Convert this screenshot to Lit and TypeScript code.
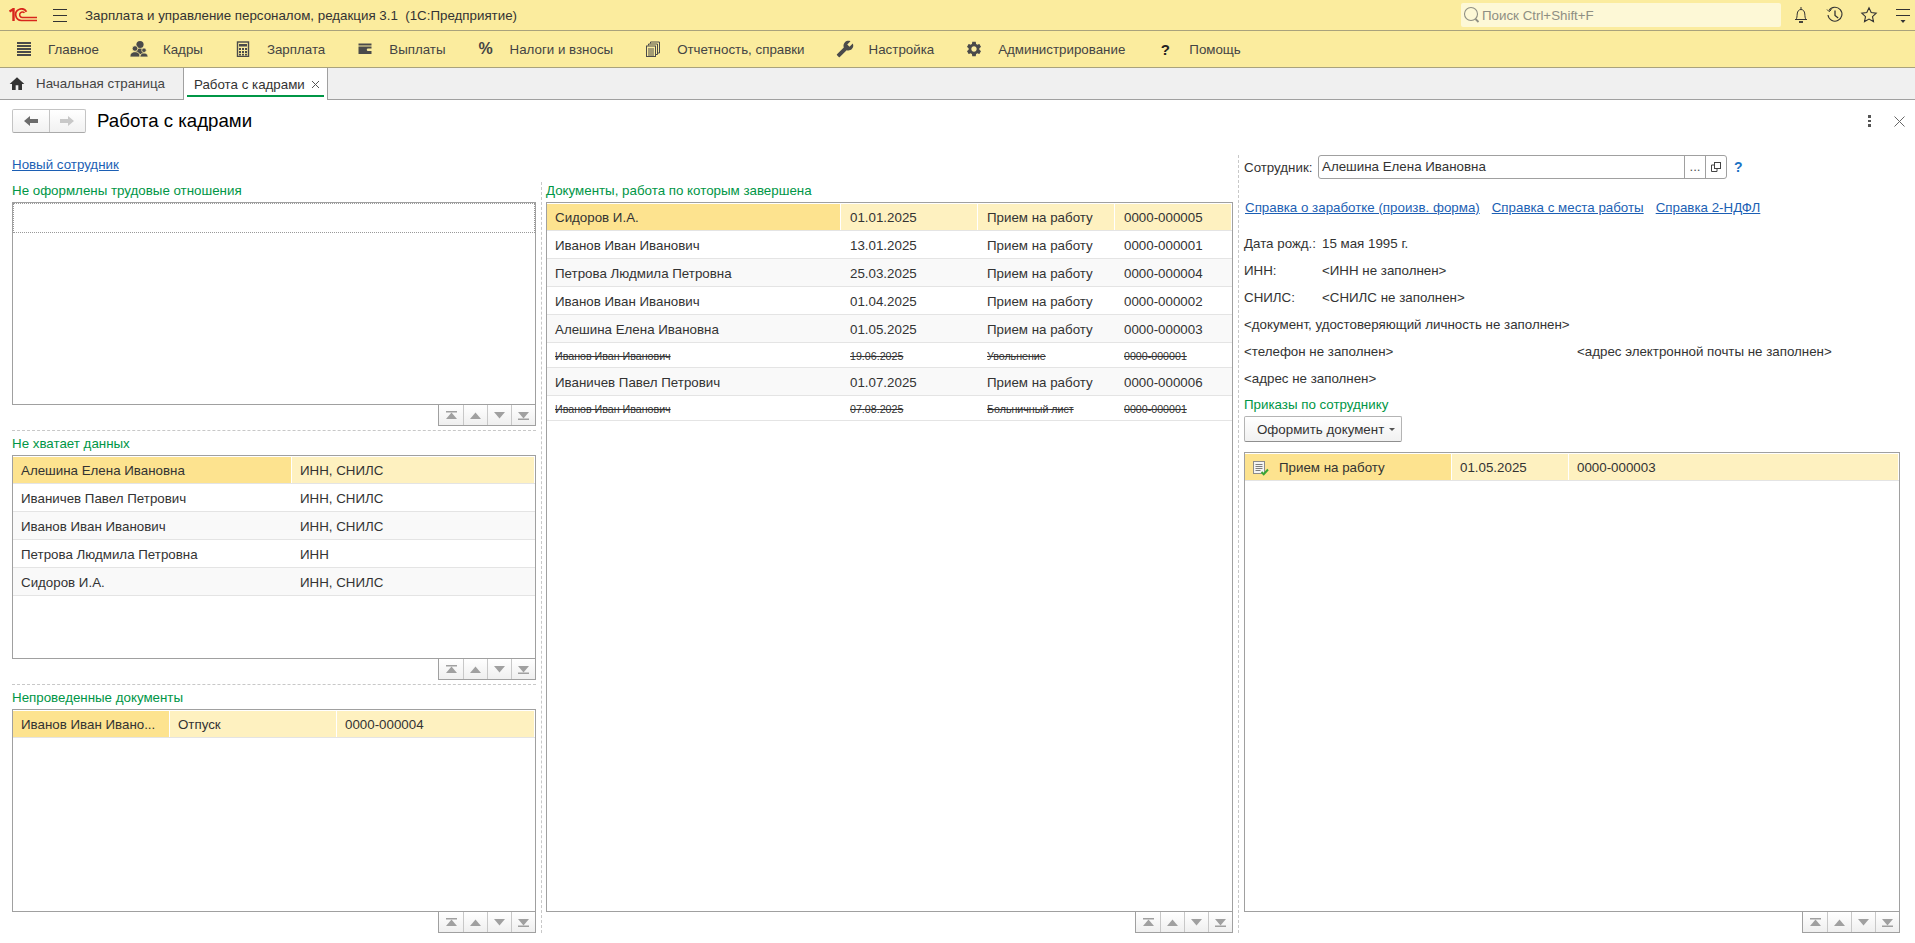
import { LitElement, html, svg, css } from 'lit';
import { customElement } from 'lit/decorators.js';

// icons
const icons = {
  list: html`<svg width="16" height="16" viewBox="0 0 16 16" fill="#4a4a4a"><rect x="1" y="1" width="14" height="2"/><rect x="1" y="4" width="14" height="2"/><rect x="1" y="7" width="14" height="2"/><rect x="1" y="10" width="14" height="2"/><rect x="1" y="13" width="14" height="2"/></svg>`,
  people: html`<svg width="18" height="18" viewBox="0 0 18 18" fill="#4a4a4a"><circle cx="10" cy="4.5" r="3.6"/><path d="M5.5 12c0-2.5 2-3.6 4.5-3.6s4.5 1.1 4.5 3.6v2h-9z"/><circle cx="5" cy="8.5" r="2.8" stroke="#fbec9e" stroke-width=".8"/><path d="M0 16c0-2.700 2.200-4.300 5-4.300s5 1.600 5 4.300v1H0z" stroke="#fbec9e" stroke-width=".8"/><circle cx="14" cy="10.200" r="2.300" stroke="#fbec9e" stroke-width=".8"/><path d="M10 16.500c0-2.300 1.800-3.500 4-3.500s4 1.200 4 3.500v.5h-8z" stroke="#fbec9e" stroke-width=".8"/></svg>`,
  calc: html`<svg width="16" height="16" viewBox="0 0 16 16"><rect x="2.500" y="1" width="11" height="14.500" fill="none" stroke="#4a4a4a" stroke-width="1.400"/><rect x="4" y="3" width="8" height="2.500" fill="#4a4a4a"/><g fill="#4a4a4a"><rect x="4" y="7" width="2" height="2"/><rect x="7" y="7" width="2" height="2"/><rect x="10" y="7" width="2" height="2"/><rect x="4" y="10" width="2" height="2"/><rect x="7" y="10" width="2" height="2"/><rect x="10" y="10" width="2" height="2"/><rect x="4" y="12.800" width="2" height="1.700"/><rect x="7" y="12.800" width="2" height="1.700"/><rect x="10" y="12.800" width="2" height="1.700"/></g></svg>`,
  wallet: html`<svg width="16" height="16" viewBox="0 0 16 16" fill="#4a4a4a"><path d="M1.500 2.500h13v2h-13z"/><path d="M1.500 5.500h13v2h-3.500a1 1 0 0 0 0 2.500h3.500v3h-13z"/></svg>`,
  docs: html`<svg width="16" height="16" viewBox="0 0 16 16" fill="none" stroke="#4a4a4a"><path d="M5.500 2.500V1h9v11h-1.500M3.500 4.500V3h9v10.500h-1.500"/><rect x="1.500" y="5" width="9" height="10.500" fill="#fbec9e"/><path d="M3 8h6M3 10h6M3 12h6M3 14h6" stroke-width="1"/></svg>`,
  wrench: html`<svg width="18" height="18" viewBox="0 0 24 24" fill="#4a4a4a"><path transform="translate(24 0) scale(-1 1)" d="M22.700 19l-9.100-9.100c.9-2.300.4-5-1.500-6.900-2-2-5-2.400-7.400-1.300L9 6 6 9 1.600 4.700C.4 7.100.9 10.100 2.900 12.100c1.900 1.900 4.600 2.400 6.900 1.500l9.100 9.100c.4.400 1 .4 1.400 0l2.300-2.300c.5-.4.5-1.100.1-1.400z"/></svg>`,
  gear: html`<svg width="18" height="18" viewBox="0 0 24 24" fill="#4a4a4a"><path d="M19.140 12.940c.04-.3.06-.61.06-.94 0-.32-.02-.64-.07-.94l2.030-1.580c.18-.14.23-.41.12-.61l-1.920-3.320c-.12-.22-.37-.29-.59-.22l-2.390.96c-.5-.38-1.030-.7-1.620-.94l-.36-2.540c-.04-.24-.24-.41-.48-.41h-3.840c-.24 0-.43.17-.47.41l-.36 2.540c-.59.24-1.130.57-1.620.94l-2.390-.96c-.22-.08-.47 0-.59.22L2.740 8.870c-.12.21-.08.47.12.61l2.030 1.580c-.05.3-.09.63-.09.94s.02.64.07.94l-2.030 1.580c-.18.14-.23.41-.12.61l1.920 3.320c.12.22.37.29.59.22l2.390-.96c.5.38 1.030.7 1.620.94l.36 2.540c.05.24.24.41.48.41h3.840c.24 0 .44-.17.47-.41l.36-2.540c.59-.24 1.130-.56 1.620-.94l2.390.96c.22.08.47 0 .59-.22l1.920-3.320c.12-.22.07-.47-.12-.61l-2.010-1.580zM12 15.600c-1.980 0-3.600-1.620-3.600-3.600s1.620-3.600 3.600-3.600 3.600 1.620 3.600 3.600-1.620 3.600-3.600 3.600z"/></svg>`,
  home: html`<svg width="16" height="16" viewBox="0 0 24 24" fill="#333"><path d="M10 21v-7h4v7h5.500v-9H23L12 2 1 12h3.500v9z"/></svg>`,
  bell: html`<svg width="16" height="18" viewBox="0 0 16 18" fill="none" stroke="#333"><path d="M3 13.500c1-1.500 1-3 1.200-5.500C4.400 5 6 3.500 8 3.500S11.600 5 11.800 8c.2 2.500.2 4 1.200 5.500z"/><path d="M8 1v2.500M2 13.500h12"/><path d="M6 16h4" stroke-width="1.800"/></svg>`,
  history: html`<svg width="18" height="18" viewBox="0 0 18 18" fill="none" stroke="#333" stroke-width="1.100"><path d="M3 4.500A7 7 0 1 1 2 9"/><path d="M1 3.500l2.200 2.200L5.500 3.500" stroke-width="1"/><path d="M9 4.500V9.500l3.200 2.500" stroke-width="1.300"/></svg>`,
  star: html`<svg width="18" height="18" viewBox="0 0 18 18" fill="none" stroke="#333" stroke-width="1.100"><path d="M9 1.800l2.200 4.700 5 .6-3.700 3.500 1 5L9 13.100l-4.500 2.500 1-5L1.800 7.100l5-.6z"/></svg>`,
  panel: html`<svg width="16" height="18" viewBox="0 0 16 18" fill="#333"><rect x="1" y="3" width="14" height="1"/><rect x="1" y="9" width="14" height="1"/><path d="M5.500 14h5L8 17z"/></svg>`,
  search: html`<svg width="18" height="20" viewBox="0 0 18 20" fill="none" stroke="#8f8f83"><circle cx="8" cy="9" r="6.500" stroke-width="1.100"/><path d="M12.500 14l3 3" stroke-width="1.800"/></svg>`,
  doc: html`<svg width="16" height="16" viewBox="0 0 16 16"><rect x=".5" y="1.500" width="11" height="12" fill="#f4f4f4" stroke="#8c8c8c"/><path d="M2.500 4.500h7M2.500 6.500h7M2.500 8.500h7M2.500 10.500h5" stroke="#7d7d7d"/><path d="M8.500 12l2.200 2.200L15 9.500" fill="none" stroke="#3aa535" stroke-width="2"/></svg>`,
};

const logo = html`<svg class="logo" width="29" height="14" viewBox="0 0 29 14" fill="none" stroke="#d8261c">
  <path d="M.5 3.500L4.500 1V13" stroke-width="2.400"/>
  <path d="M28 12.500H12.500a5.800 5.800 0 1 1 5-8.700" stroke-width="1.700"/>
  <path d="M28 9.500H13.500a2.800 2.800 0 1 1 2-4.700" stroke-width="1.500"/>
</svg>`;

const menu = [
  { icon: icons.list, label: 'Главное' },
  { icon: icons.people, label: 'Кадры' },
  { icon: icons.calc, label: 'Зарплата' },
  { icon: icons.wallet, label: 'Выплаты' },
  { icon: html`<b class="glyph">%</b>`, label: 'Налоги и взносы' },
  { icon: icons.docs, label: 'Отчетность, справки' },
  { icon: icons.wrench, label: 'Настройка' },
  { icon: icons.gear, label: 'Администрирование' },
  { icon: html`<b class="glyph ask">?</b>`, label: 'Помощь' },
];

const missing = [
  ['Алешина Елена Ивановна', 'ИНН, СНИЛС'],
  ['Иваничев Павел Петрович', 'ИНН, СНИЛС'],
  ['Иванов Иван Иванович', 'ИНН, СНИЛС'],
  ['Петрова Людмила Петровна', 'ИНН'],
  ['Сидоров И.А.', 'ИНН, СНИЛС'],
];

const finished: { cells: string[]; off?: boolean }[] = [
  { cells: ['Сидоров И.А.', '01.01.2025', 'Прием на работу', '0000-000005'] },
  { cells: ['Иванов Иван Иванович', '13.01.2025', 'Прием на работу', '0000-000001'] },
  { cells: ['Петрова Людмила Петровна', '25.03.2025', 'Прием на работу', '0000-000004'] },
  { cells: ['Иванов Иван Иванович', '01.04.2025', 'Прием на работу', '0000-000002'] },
  { cells: ['Алешина Елена Ивановна', '01.05.2025', 'Прием на работу', '0000-000003'] },
  { cells: ['Иванов Иван Иванович', '19.06.2025', 'Увольнение', '0000-000001'], off: true },
  { cells: ['Иваничев Павел Петрович', '01.07.2025', 'Прием на работу', '0000-000006'] },
  { cells: ['Иванов Иван Иванович', '07.08.2025', 'Больничный лист', '0000-000001'], off: true },
];

@customElement('app-root')
export class AppRoot extends LitElement {
  static styles = css`
    :host {
      display: block;
      height: 943px;
      overflow: hidden;
      background: #fff;
      color: #333;
      font: 13.33px 'Liberation Sans', Arial, sans-serif;
    }

    /* top bars */
    .topbar {
      height: 30px;
      background: #fbec9e;
      border-bottom: 1px solid #a9a27c;
      display: flex;
      align-items: center;
    }
    .logo { margin-left: 9px; }
    .burger {
      width: 14px;
      height: 11px;
      margin-left: 15px;
      border-top: 1px solid #333;
      border-bottom: 1px solid #333;
      position: relative;
    }
    .burger::after {
      content: '';
      position: absolute;
      left: 0;
      right: 0;
      top: 5px;
      border-top: 1px solid #333;
    }
    .app-title { margin-left: 18px; white-space: pre; }
    .search {
      margin-left: auto;
      width: 320px;
      height: 24px;
      background: #fdf8d6;
      border-radius: 2px;
      display: flex;
      align-items: center;
      color: #8f8f83;
      padding-left: 2px;
      gap: 1px;
      box-sizing: border-box;
    }
    .tools { display: flex; align-items: center; margin-left: 11px; margin-right: 3px; gap: 16px; }
    .tools span { width: 18px; height: 18px; display: grid; place-items: center; }

    .menu {
      height: 36px;
      background: #fbec9e;
      border-bottom: 1px solid #a9a27c;
      display: flex;
      align-items: center;
      padding-left: 12px;
      gap: 28px;
    }
    .menu-item { display: flex; align-items: center; gap: 12px; color: #444; }
    .menu-icon { width: 24px; height: 20px; display: grid; place-items: center; }
    .glyph { font-size: 16px; color: #444; }
    .ask { color: #222; font-size: 15px; }

    .tabs {
      height: 31px;
      background: #f0f0f0;
      border-bottom: 1px solid #a0a0a0;
      display: flex;
    }
    .tab {
      display: flex;
      align-items: center;
      box-sizing: border-box;
      border-right: 1px solid #a0a0a0;
      position: relative;
    }
    .tab-home { width: 184px; padding-left: 9px; gap: 11px; color: #444; }
    .tab-active { width: 144px; padding-left: 10px; background: #fff; margin-bottom: -1px; }
    .tab-active::after {
      content: '';
      position: absolute;
      left: 3px;
      right: 3px;
      bottom: 3px;
      height: 2px;
      background: #009646;
    }
    .tab-close { position: absolute; right: 7px; top: 12px; }

    /* page head */
    .head {
      height: 55px;
      display: flex;
      align-items: flex-start;
      box-sizing: border-box;
      padding: 9px 10px 0 12px;
    }
    .nav {
      display: flex;
      width: 74px;
      height: 24px;
      box-sizing: border-box;
      border: 1px solid #c4c4c4;
      border-bottom-color: #aaa;
      border-radius: 2px;
      background: linear-gradient(#fff, #f1f1f1);
    }
    .nav span { flex: 1; display: grid; place-items: center; }
    .nav span + span { border-left: 1px solid #c4c4c4; }
    .title { font-size: 18.67px; color: #000; margin-left: 11px; line-height: 24px; }
    .head-tools { margin-left: auto; display: flex; align-items: center; gap: 23px; height: 24px; }
    .dots { display: flex; flex-direction: column; gap: 2px; }
    .dots i { width: 3px; height: 2.5px; background: #555; display: block; }

    /* body layout */
    .body { display: flex; height: 778px; padding-left: 12px; }
    .main { width: 1221px; }
    .link-row { height: 27px; line-height: 19px; }
    .columns { display: flex; height: 751px; }
    .col { display: flex; flex-direction: column; }
    .col-left { width: 524px; }
    .col-center { width: 687px; }
    .col-right { width: 656px; }
    .vsplit { width: 0; height: 751px; margin: 0 4px 0 5px; border-left: 1px dashed #c8c8c8; }
    .vsplit-main { height: 778px; margin: 0 5px; }
    .hsplit { border-top: 1px dashed #c8c8c8; margin-top: 4px; }

    a { color: #1c5fb4; text-decoration: underline; }
    .heading { color: #009646; height: 20px; line-height: 18px; }
    .heading-next { height: 24px; line-height: 26px; }

    /* tables */
    .table {
      box-sizing: border-box;
      border: 1px solid #a0a0a0;
      background: #fff;
      overflow: hidden;
    }
    .h-top { height: 203px; }
    .h-mid { height: 204px; }
    .h-bottom { height: 203px; }
    .h-docs { height: 710px; }
    .h-orders { height: 460px; }

    .focus { height: 30px; box-sizing: border-box; border: 1px dotted #999; }

    .row {
      display: grid;
      height: 28px;
      box-sizing: border-box;
      border-bottom: 1px solid #e4e4e4;
      align-items: center;
      column-gap: 1px;
      white-space: nowrap;
    }
    .row:nth-child(odd) { background: #f9f9f9; }
    .row.sel {
      background: #fff;
      padding: 1px 1px 0 0;
      align-items: stretch;
    }
    .row.sel .cell { background: #fef1c0; line-height: 25px; }
    .row.sel .cell:first-child { background: #fde38f; }
    .row.off { height: 25px; font-size: 10.67px; text-decoration: line-through; }
    .cell { padding: 1px 0 0 9px; overflow: hidden; }
    .cell:first-child { padding-left: 8px; }
    .cols-missing { grid-template-columns: 278px 1fr; }
    .cols-draft { grid-template-columns: 156px 166px 1fr; }
    .cols-docs { grid-template-columns: 293px 136px 136px 1fr; }
    .cols-orders { grid-template-columns: 206px 116px 1fr; }
    .cols-missing .cell, .cols-draft .cell, .cols-orders .cell { padding-left: 8px; }
    .order-cell { display: flex; align-items: center; gap: 10px; }

    .pager {
      display: flex;
      align-self: flex-end;
      margin-top: -1px;
      height: 22px;
      box-sizing: border-box;
      border: 1px solid #a0a0a0;
      background: linear-gradient(#fff, #efefef);
    }
    .pager span { width: 23px; display: grid; place-items: center; }
    .pager span:first-child { width: 24px; }
    .pager span + span { border-left: 1px solid #c8c8c8; }

    /* employee card */
    .employee { display: flex; align-items: center; height: 24px; }
    .employee label { width: 74px; }
    .field {
      width: 409px;
      height: 24px;
      box-sizing: border-box;
      border: 1px solid #a0a0a0;
      border-radius: 3px;
      display: flex;
      align-items: stretch;
      line-height: 22px;
    }
    .field-value { flex: 1; padding-left: 3px; }
    .field-btn {
      width: 20px;
      border-left: 1px solid #a0a0a0;
      display: grid;
      place-items: center;
      color: #555;
    }
    .hint { color: #1c73c4; font-weight: bold; margin-left: 7px; font-size: 14px; }
    .links { display: flex; gap: 12px; height: 20px; margin-top: 19px; padding-left: 1px; line-height: 20px; }
    .info { margin-top: 12px; }
    .line { height: 27px; line-height: 27px; display: flex; }
    .line-label { width: 78px; }
    .line-half { width: 333px; }
    .make {
      width: 158px;
      height: 26px;
      box-sizing: border-box;
      border: 1px solid #b4b4b4;
      border-bottom-color: #8f8f8f;
      border-radius: 2px;
      background: linear-gradient(#fff, #f1f1f1);
      display: flex;
      align-items: center;
      padding-left: 12px;
      gap: 5px;
      margin-bottom: 10px;
    }
    .caret { width: 0; height: 0; border: 3px solid transparent; border-top: 3px solid #555; border-bottom: 0; }
  `;

  private pager() {
    const tri = (up: boolean, bar: boolean) => html`<svg width="11" height="9" viewBox="0 0 11 9" fill="#a0a0a0">
      ${bar ? svg`<rect x="0" y="${up ? 0 : 7.5}" width="11" height="1.500"/>` : ''}
      <path d="${up ? 'M5.500 1.500L11 8H0z' : 'M0 1h11L5.500 7.500z'}"/>
    </svg>`;
    return html`<div class="pager">
      <span>${tri(true, true)}</span><span>${tri(true, false)}</span><span>${tri(false, false)}</span><span>${tri(false, true)}</span>
    </div>`;
  }

  render() {
    return html`
      <div class="topbar">
        ${logo}
        <div class="burger"></div>
        <div class="app-title">Зарплата и управление персоналом, редакция 3.1  (1С:Предприятие)</div>
        <div class="search">${icons.search}<span>Поиск Ctrl+Shift+F</span></div>
        <div class="tools">
          <span>${icons.bell}</span><span>${icons.history}</span><span>${icons.star}</span><span>${icons.panel}</span>
        </div>
      </div>
      <div class="menu">
        ${menu.map(m => html`<div class="menu-item"><span class="menu-icon">${m.icon}</span><span>${m.label}</span></div>`)}
      </div>
      <div class="tabs">
        <div class="tab tab-home">${icons.home}<span>Начальная страница</span></div>
        <div class="tab tab-active">
          <span>Работа с кадрами</span>
          <svg class="tab-close" width="9" height="9" viewBox="0 0 9 9" stroke="#555"><path d="M1 1l7 7M8 1L1 8"/></svg>
        </div>
      </div>

      <div class="head">
        <div class="nav">
          <span><svg width="14" height="10" viewBox="0 0 14 10" fill="#6c6c6c"><path d="M0 5l6-5v3h8v4H6v3z"/></svg></span>
          <span><svg width="14" height="10" viewBox="0 0 14 10" fill="#c8c8c8"><path d="M14 5L8 0v3H0v4h8v3z"/></svg></span>
        </div>
        <div class="title">Работа с кадрами</div>
        <div class="head-tools">
          <div class="dots"><i></i><i></i><i></i></div>
          <svg width="11" height="11" viewBox="0 0 11 11" stroke="#666"><path d="M.5 .5l10 10M10.500 .5l-10 10"/></svg>
        </div>
      </div>

      <div class="body">
        <div class="main">
          <div class="link-row"><a>Новый сотрудник</a></div>
          <div class="columns">
            <div class="col col-left">
              <div class="heading">Не оформлены трудовые отношения</div>
              <div class="table h-top"><div class="focus"></div></div>
              ${this.pager()}
              <div class="hsplit"></div>
              <div class="heading heading-next">Не хватает данных</div>
              <div class="table h-mid">
                ${missing.map((r, i) => html`<div class="row cols-missing ${i === 0 ? 'sel' : ''}">
                  <div class="cell">${r[0]}</div><div class="cell">${r[1]}</div>
                </div>`)}
              </div>
              ${this.pager()}
              <div class="hsplit"></div>
              <div class="heading heading-next">Непроведенные документы</div>
              <div class="table h-bottom">
                <div class="row cols-draft sel">
                  <div class="cell">Иванов Иван Ивано...</div><div class="cell">Отпуск</div><div class="cell">0000-000004</div>
                </div>
              </div>
              ${this.pager()}
            </div>
            <div class="vsplit"></div>
            <div class="col col-center">
              <div class="heading">Документы, работа по которым завершена</div>
              <div class="table h-docs">
                ${finished.map((r, i) => html`<div class="row cols-docs ${i === 0 ? 'sel' : ''} ${r.off ? 'off' : ''}">
                  ${r.cells.map(c => html`<div class="cell">${c}</div>`)}
                </div>`)}
              </div>
              ${this.pager()}
            </div>
          </div>
        </div>
        <div class="vsplit vsplit-main"></div>
        <div class="col col-right">
          <div class="employee">
            <label>Сотрудник:</label>
            <div class="field">
              <div class="field-value">Алешина Елена Ивановна</div>
              <div class="field-btn">...</div>
              <div class="field-btn">
                <svg width="10" height="10" viewBox="0 0 10 10" fill="none" stroke="#444"><rect x="3.500" y=".5" width="6" height="6"/><path d="M3.500 3H.5v6.500H6V6.500"/></svg>
              </div>
            </div>
            <span class="hint">?</span>
          </div>
          <div class="links">
            <a>Справка о заработке (произв. форма)</a><a>Справка с места работы</a><a>Справка 2-НДФЛ</a>
          </div>
          <div class="info">
            <div class="line"><span class="line-label">Дата рожд.:</span><span>15 мая 1995 г.</span></div>
            <div class="line"><span class="line-label">ИНН:</span><span>&lt;ИНН не заполнен&gt;</span></div>
            <div class="line"><span class="line-label">СНИЛС:</span><span>&lt;СНИЛС не заполнен&gt;</span></div>
            <div class="line">&lt;документ, удостоверяющий личность не заполнен&gt;</div>
            <div class="line"><span class="line-half">&lt;телефон не заполнен&gt;</span><span>&lt;адрес электронной почты не заполнен&gt;</span></div>
            <div class="line">&lt;адрес не заполнен&gt;</div>
          </div>
          <div class="heading heading-next">Приказы по сотруднику</div>
          <div class="make"><span>Оформить документ</span><i class="caret"></i></div>
          <div class="table h-orders">
            <div class="row cols-orders sel">
              <div class="cell order-cell">${icons.doc}<span>Прием на работу</span></div>
              <div class="cell">01.05.2025</div>
              <div class="cell">0000-000003</div>
            </div>
          </div>
          ${this.pager()}
        </div>
      </div>
    `;
  }
}
